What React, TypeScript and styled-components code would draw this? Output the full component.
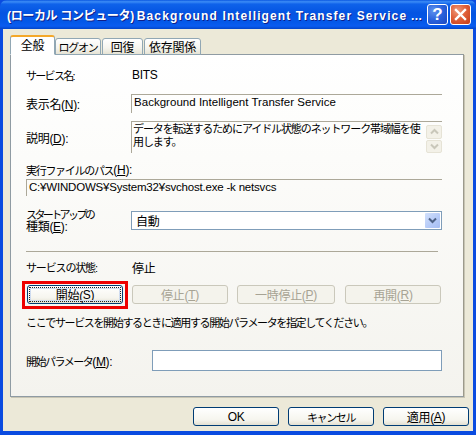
import React from "react";
import styled, { createGlobalStyle } from "styled-components";

const Global = createGlobalStyle`
  html, body { margin: 0; padding: 0; background: #0831d9; }
  #root { width: 476px; height: 435px; }
  * { box-sizing: border-box; }
`;

const uiFont = `"Liberation Sans", "Noto Sans CJK JP", sans-serif`;

const Win = styled.div`
  width: 476px;
  height: 435px;
  display: flex;
  flex-direction: column;
  overflow: hidden;
  font-family: ${uiFont};
  font-size: 12px;
  letter-spacing: -0.3px;
  color: #000;
  background: #0a4be0;
`;

const TitleBar = styled.div`
  height: 29px;
  flex: none;
  display: flex;
  align-items: center;
  padding: 0 5px 0 7px;
  background: linear-gradient(180deg, #0a57e0 0%, #3c8cf6 6%, #0f62ea 14%, #0454e2 45%, #0458e8 75%, #0a5cf0 90%, #0345c8 100%);
  border-radius: 7px 7px 0 0;
`;

const TitleText = styled.div`
  flex: 1;
  min-width: 0;
  font-size: 12px;
  font-weight: 700;
  letter-spacing: 1.12px;
  color: #fff;
  text-shadow: 1px 1px 0 #0f1f8a;
  white-space: nowrap;
`;

const TitleKana = styled.span`
  letter-spacing: -0.35px;
`;

const TitleDots = styled.span`
  letter-spacing: 0.4px;
`;

const CapBtn = styled.div<{ $close?: boolean }>`
  width: 21px;
  height: 21px;
  margin-left: 2px;
  flex: none;
  display: flex;
  align-items: center;
  justify-content: center;
  border: 1px solid #fff;
  border-radius: 3px;
  color: #fff;
  font-size: 17px;
  font-weight: 700;
  letter-spacing: 0;
  background: ${(p) =>
    p.$close
      ? "radial-gradient(circle at 35% 30%, #ee9a7c 0%, #e0613a 45%, #c43a17 100%)"
      : "radial-gradient(circle at 30% 30%, #5f93ee 0%, #2a62dc 50%, #1c48c0 100%)"};
`;

const Frame = styled.div`
  flex: 1;
  min-height: 0;
  margin: 0 3px 4px 3px;
  padding: 6px 0 0 7px;
  background: #ece9d8;
  display: flex;
  flex-direction: column;
`;

const TabStrip = styled.div`
  display: flex;
  align-items: flex-end;
  height: 20px;
  flex: none;
  position: relative;
  z-index: 1;
  margin-bottom: -1px;
`;

const Tab = styled.div<{ $active?: boolean; $w: number }>`
  width: ${(p) => p.$w}px;
  height: ${(p) => (p.$active ? 20 : 17)}px;
  margin-right: ${(p) => (p.$active ? 0 : 1)}px;
  padding-bottom: ${(p) => (p.$active ? 3 : 0)}px;
  display: flex;
  align-items: center;
  justify-content: center;
  white-space: nowrap;
  border: 1px solid #91a7b4;
  border-radius: 3px 3px 0 0;
  background: ${(p) => (p.$active ? "#fff" : "linear-gradient(180deg, #fff 0%, #f5f4ee 60%, #e6e3d4 100%)")};
  ${(p) => (p.$active ? "border-top: 2px solid #f4a82a; border-bottom: 1px solid #fff;" : "")}
`;

/* Proportional-looking kana runs: narrower than the kanji beside them. */
const Kana = styled.span<{ $ls: number }>`
  font-size: 11px;
  letter-spacing: ${(p) => p.$ls}px;
`;

const Panel = styled.div`
  width: 454px;
  height: 343px;
  flex: none;
  border: 1px solid #8f9ba3;
  border-right-color: #9c9a8c;
  box-shadow: 1px 1px 0 #c8c5b4;
  background: linear-gradient(180deg, #ffffff 0%, #fcfcfa 30%, #f4f3ee 100%);
  padding: 12px 21px 0 15px;
  display: flex;
  flex-direction: column;
`;

const Row = styled.div<{ $h: number; $mt: number }>`
  height: ${(p) => p.$h}px;
  margin-top: ${(p) => p.$mt}px;
  flex: none;
  display: flex;
  align-items: center;
`;

const Label = styled.div<{ $w?: number }>`
  width: ${(p) => p.$w ?? 105}px;
  flex: none;
  white-space: nowrap;
`;

const TwoLine = styled(Label)`
  line-height: 12px;
`;

const Plain = styled.div`
  height: 100%;
  display: flex;
  align-items: center;
  white-space: pre;
`;

const Value = styled.div`
  padding-left: 1px;
`;

const ReadOnlyField = styled.div<{ $ls: number }>`
  flex: 1;
  height: 100%;
  border-top: 1px solid #aca899;
  border-left: 1px solid #aca899;
  padding: 0 0 0 2px;
  white-space: nowrap;
  font-size: 11.5px;
  letter-spacing: ${(p) => p.$ls}px;
  line-height: 14px;
`;

const MemoField = styled.div`
  flex: 1;
  height: 100%;
  border-top: 1px solid #aca899;
  border-left: 1px solid #aca899;
  display: flex;
  line-height: 13px;
  padding: 1px 0 0 1px;
`;

const MemoText = styled.div`
  flex: 1;
  min-width: 0;
`;

const ScrollCol = styled.div`
  width: 16px;
  flex: none;
  margin-top: 2px;
  display: flex;
  flex-direction: column;
  gap: 1px;
`;

const ScrollBtn = styled.div`
  height: 15px;
  display: flex;
  align-items: center;
  justify-content: center;
  background: #f3f1e8;
  border: 1px solid #e6e3d6;
  border-radius: 2px;
`;

const SelectBox = styled.div`
  flex: 1;
  height: 100%;
  border: 1px solid #7f9db9;
  background: #fff;
  display: flex;
  align-items: center;
  justify-content: space-between;
  padding: 0 1px 0 4px;
`;

const DropBtn = styled.div`
  width: 15px;
  height: 15px;
  border-radius: 1px;
  display: flex;
  align-items: center;
  justify-content: center;
  background: linear-gradient(135deg, #d2e0fb 0%, #b4c9f7 60%, #a5bdf2 100%);
`;

const Divider = styled.div`
  width: 412px;
  height: 1px;
  flex: none;
  margin-top: 21px;
  background: #aca899;
`;

const ButtonRow = styled.div`
  display: flex;
  height: 19px;
  flex: none;
  margin-top: 11px;
  padding-left: 1px;
`;

const XpButton = styled.div<{ $w: number; $ml?: number; $disabled?: boolean }>`
  position: relative;
  width: ${(p) => p.$w}px;
  height: 19px;
  flex: none;
  margin-left: ${(p) => p.$ml ?? 0}px;
  display: flex;
  align-items: center;
  justify-content: center;
  white-space: pre;
  border: 1px solid ${(p) => (p.$disabled ? "#cac8bb" : "#003c74")};
  border-radius: 3px;
  color: ${(p) => (p.$disabled ? "#a7a394" : "#000")};
  background: ${(p) => (p.$disabled ? "#f4f3ec" : "linear-gradient(180deg, #fff 0%, #f6f5ee 70%, #e3e0d2 100%)")};
`;

const FocusRing = styled.div`
  position: absolute;
  inset: 1px;
  border: 1px dotted #222;
  pointer-events: none;
  box-shadow: inset 0 0 0 1px #cfdcf0;
`;

const Highlight = styled.div`
  position: absolute;
  left: -6px;
  top: -5px;
  width: 106px;
  height: 28px;
  border: 3px solid #ee0000;
  pointer-events: none;
`;

const ParamInput = styled.div`
  flex: 1;
  height: 100%;
  border: 1px solid #7f9db9;
  background: #fff;
`;

const Footer = styled.div`
  display: flex;
  justify-content: flex-end;
  gap: 9px;
  margin-top: 10px;
  padding-right: 4px;
  flex: none;
`;

const Chevron = ({ up, color }: { up?: boolean; color: string }) => (
  <svg width="9" height="7" viewBox="0 0 9 7">
    <path
      d={up ? "M1 5.5 L4.5 2 L8 5.5" : "M1 1.5 L4.5 5 L8 1.5"}
      fill="none"
      stroke={color}
      strokeWidth="2"
    />
  </svg>
);

const CloseIcon = () => (
  <svg width="13" height="13" viewBox="0 0 13 13">
    <path d="M2 2 L11 11 M11 2 L2 11" stroke="#fff" strokeWidth="2.4" strokeLinecap="square" />
  </svg>
);

export default function App() {
  return (
    <Win>
      <Global />
      <TitleBar>
        <TitleText>
          <TitleKana>(ローカル コンピュータ) </TitleKana>Background Intelligent Transfer Service<TitleDots> ...</TitleDots>
        </TitleText>
        <CapBtn>?</CapBtn>
        <CapBtn $close>
          <CloseIcon />
        </CapBtn>
      </TitleBar>
      <Frame>
        <TabStrip>
          <Tab $active $w={45}>全般</Tab>
          <Tab $w={46}><Kana $ls={-1.2}>ログオン</Kana></Tab>
          <Tab $w={41}>回復</Tab>
          <Tab $w={57}>依存関係</Tab>
        </TabStrip>
        <Panel>
          <Row $h={16} $mt={0}>
            <Label><Kana $ls={-1.7}>サービス名:</Kana></Label>
            <Value>BITS</Value>
          </Row>
          <Row $h={19} $mt={11}>
            <Label>表示名(<u>N</u>):</Label>
            <ReadOnlyField $ls={0.03}>Background Intelligent Transfer Service</ReadOnlyField>
          </Row>
          <Row $h={32} $mt={8}>
            <Label>説明(<u>D</u>):</Label>
            <MemoField>
              <MemoText>
                <Kana $ls={-1.1}>データを転送するためにアイドル状態のネットワーク帯域幅を使用します。</Kana>
              </MemoText>
              <ScrollCol>
                <ScrollBtn><Chevron up color="#c9c7ba" /></ScrollBtn>
                <ScrollBtn><Chevron color="#c9c7ba" /></ScrollBtn>
              </ScrollCol>
            </MemoField>
          </Row>
          <Row $h={14} $mt={10}>
            <Plain><Kana $ls={-1.3}>実行ファイルのパス</Kana>(<u>H</u>):</Plain>
          </Row>
          <Row $h={17} $mt={2}>
            <ReadOnlyField $ls={-0.2}>C:¥WINDOWS¥System32¥svchost.exe -k netsvcs</ReadOnlyField>
          </Row>
          <Row $h={19} $mt={15}>
            <TwoLine>
              <Kana $ls={-2.6}>スタートアップの</Kana>
              <br />
              種類(<u>E</u>):
            </TwoLine>
            <SelectBox>
              自動
              <DropBtn><Chevron color="#4d6185" /></DropBtn>
            </SelectBox>
          </Row>
          <Divider />
          <Row $h={14} $mt={8}>
            <Label><Kana $ls={-1.15}>サービスの状態:</Kana></Label>
            <Value>停止</Value>
          </Row>
          <ButtonRow>
            <XpButton $w={96}>
              開始(<u>S</u>)
              <FocusRing />
              <Highlight />
            </XpButton>
            <XpButton $w={96} $ml={9} $disabled>停止(<u>T</u>)</XpButton>
            <XpButton $w={98} $ml={9} $disabled>一時停止(<u>P</u>)</XpButton>
            <XpButton $w={96} $ml={10} $disabled>再開(<u>R</u>)</XpButton>
          </ButtonRow>
          <Row $h={14} $mt={11}>
            <Plain><Kana $ls={-1.36}>ここでサービスを開始するときに適用する開始パラメータを指定してください。</Kana></Plain>
          </Row>
          <Row $h={21} $mt={21}>
            <Label $w={126}><Kana $ls={-1.5}>開始パラメータ</Kana>(<u>M</u>):</Label>
            <ParamInput />
          </Row>
        </Panel>
        <Footer>
          <XpButton $w={86}>OK</XpButton>
          <XpButton $w={86}><Kana $ls={-1.4}>キャンセル</Kana></XpButton>
          <XpButton $w={86}>適用(<u>A</u>)</XpButton>
        </Footer>
      </Frame>
    </Win>
  );
}
